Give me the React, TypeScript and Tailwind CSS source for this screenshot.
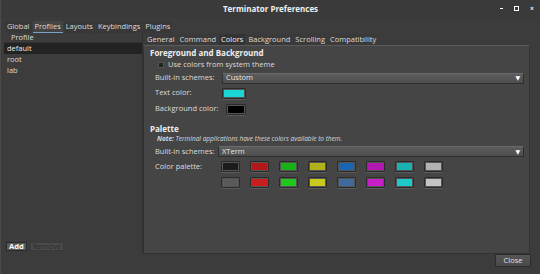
import React from 'react';

const font = { fontFamily: '"Open Sans", "DejaVu Sans", sans-serif' };

const palette = [
  ['#1c1c1c', '#b21818', '#18b218', '#b2b218', '#1866b2', '#b218b2', '#18b2b2', '#b2b2b2'],
  ['#5a5a5a', '#c81e1e', '#1ec81e', '#c8c81e', '#3f6a9e', '#c81ec8', '#1ec8c8', '#c4c4c4'],
];

const Swatch = ({ color, w = 'w-[19px]' }: { color: string; w?: string }) => (
  <div className={`${w} h-[11px] rounded-[1px] border border-[#2a2a2a] bg-[#555] p-[1px] shadow-[0_1px_0_#5a5a5a]`}>
    <div className="w-full h-full" style={{ background: color }} />
  </div>
);

const Combo = ({ value }: { value: string }) => (
  <div className="flex-1 h-[11px] flex items-center justify-between border border-[#2e2e2e] border-t-[#6a6a6a] bg-gradient-to-b from-[#5d5d5d] to-[#4e4e4e] pl-[3px] pr-[3px] text-[#e6e6e6]">
    <span>{value}</span>
    <span className="text-[6px] text-white leading-none">▼</span>
  </div>
);

export default function App() {
  const topTabs = ['Global', 'Profiles', 'Layouts', 'Keybindings', 'Plugins'];
  const innerTabs = ['General', 'Command', 'Colors', 'Background', 'Scrolling', 'Compatibility'];

  return (
    <div className="w-[540px] h-[274px] bg-[#3c3c3c] text-[#dcdcdc] text-[7.5px] leading-none flex flex-col overflow-hidden border-l border-[#4a4a4a]" style={font}>
      {/* Title bar */}
      <div className="h-[18px] flex items-center relative bg-[#3a3a3a]">
        <div className="flex-1 text-center font-bold text-[8px] text-[#f0f0f0]">Terminator Preferences</div>
        <div className="absolute right-[6px] top-[5px] flex items-center gap-[11px] text-[#eee]">
          <span className="w-[3px] h-[1px] bg-white" />
          <span className="w-[5px] h-[5px] border border-white" />
          <span className="text-[7px] font-bold">×</span>
        </div>
      </div>

      {/* Top tabs */}
      <div className="h-[14px] flex items-end pl-[4px] gap-[1px] mt-[1px]">
        {topTabs.map((t) => (
          <div
            key={t}
            className={`px-[2px] h-[12px] flex items-center ${t === 'Profiles' ? 'bg-[#444] border-b border-[#7aa0c8]' : 'bg-[#383838]'}`}
          >
            {t}
          </div>
        ))}
      </div>

      <div className="flex flex-1">
        {/* Left profiles panel */}
        <div className="w-[142px] flex flex-col border-r border-[#2e2e2e] pl-[3px] mb-[21px]">
          <div className="h-[10px] flex items-center pl-[7px] border-b border-[#333] text-[#dcdcdc]">Profile</div>
          <div className="h-[11px] flex items-center pl-[3px] bg-[#232323] text-[#eaeaea]">default</div>
          <div className="h-[11px] flex items-center pl-[3px]">root</div>
          <div className="h-[11px] flex items-center pl-[3px]">lab</div>
          <div className="flex-1" />
          <div className="flex items-center gap-[3px] mb-[2px] ml-[2px]">
            <div className="px-[2px] h-[9px] flex items-center bg-[#5a5a5a] border border-[#2a2a2a] text-white font-bold">Add</div>
            <div className="px-[2px] h-[9px] flex items-center text-[#2a2a2a] bg-[#4a4a4a] border border-[#3a3a3a]">Remove</div>
          </div>
        </div>

        {/* Right panel */}
        <div className="flex-1 flex flex-col pr-[10px]">
          <div className="h-[12px] flex items-end pl-[2px] gap-[1px]">
            {innerTabs.map((t) => (
              <div
                key={t}
                className={`px-[2px] h-[11px] flex items-center ${t === 'Colors' ? 'bg-[#333] text-[#f0f0f0]' : 'bg-[#3a3a3a]'}`}
              >
                {t}
              </div>
            ))}
          </div>

          <div className="flex-1 mb-[20px] bg-[#454545] border border-[#333] border-t-[#5a5a5a] pl-[6px] pt-[3px]">
            <div className="font-bold text-[#eee] text-[8px]">Foreground and Background</div>
            <div className="flex items-center mt-[4px] ml-[8px] gap-[4px]">
              <div className="w-[6px] h-[6px] bg-[#222] border border-[#555]" />
              <span>Use colors from system theme</span>
            </div>
            <div className="flex items-center mt-[4px] ml-[5px] pr-[5px]">
              <span className="w-[67px]">Built-in schemes:</span>
              <Combo value="Custom" />
            </div>
            <div className="flex items-center mt-[4px] ml-[5px]">
              <span className="w-[67px]">Text color:</span>
              <Swatch color="#1ad6d6" w="w-[24px]" />
            </div>
            <div className="flex items-center mt-[5px] ml-[5px]">
              <span className="w-[71px]">Background color:</span>
              <Swatch color="#000" w="w-[20px]" />
            </div>

            <div className="font-bold text-[#eee] text-[8px] mt-[10px]">Palette</div>
            <div className="mt-[3px] ml-[7px] italic text-[6.5px] text-[#dadada]">
              <span className="font-bold">Note:</span> Terminal applications have these colors available to them.
            </div>
            <div className="flex items-center mt-[4px] ml-[5px] pr-[5px]">
              <span className="w-[63px]">Built-in schemes:</span>
              <Combo value="XTerm" />
            </div>
            <div className="flex mt-[4px] ml-[5px]">
              <span className="w-[66px] pt-[2px]">Color palette:</span>
              <div className="grid grid-cols-8 gap-x-[10px] gap-y-[5px]">
                {palette.flat().map((c, i) => (
                  <Swatch key={i} color={c} />
                ))}
              </div>
            </div>
          </div>
        </div>
      </div>

      {/* Bottom bar */}
      <div className="h-[20px] flex items-start justify-end pr-[9px] -mt-[20px] pointer-events-none">
        <div className="w-[36px] h-[13px] flex items-center justify-center bg-gradient-to-b from-[#555] to-[#4a4a4a] border border-[#2c2c2c] text-[#e0e0e0] rounded-[1px]">
          Close
        </div>
      </div>
    </div>
  );
}
